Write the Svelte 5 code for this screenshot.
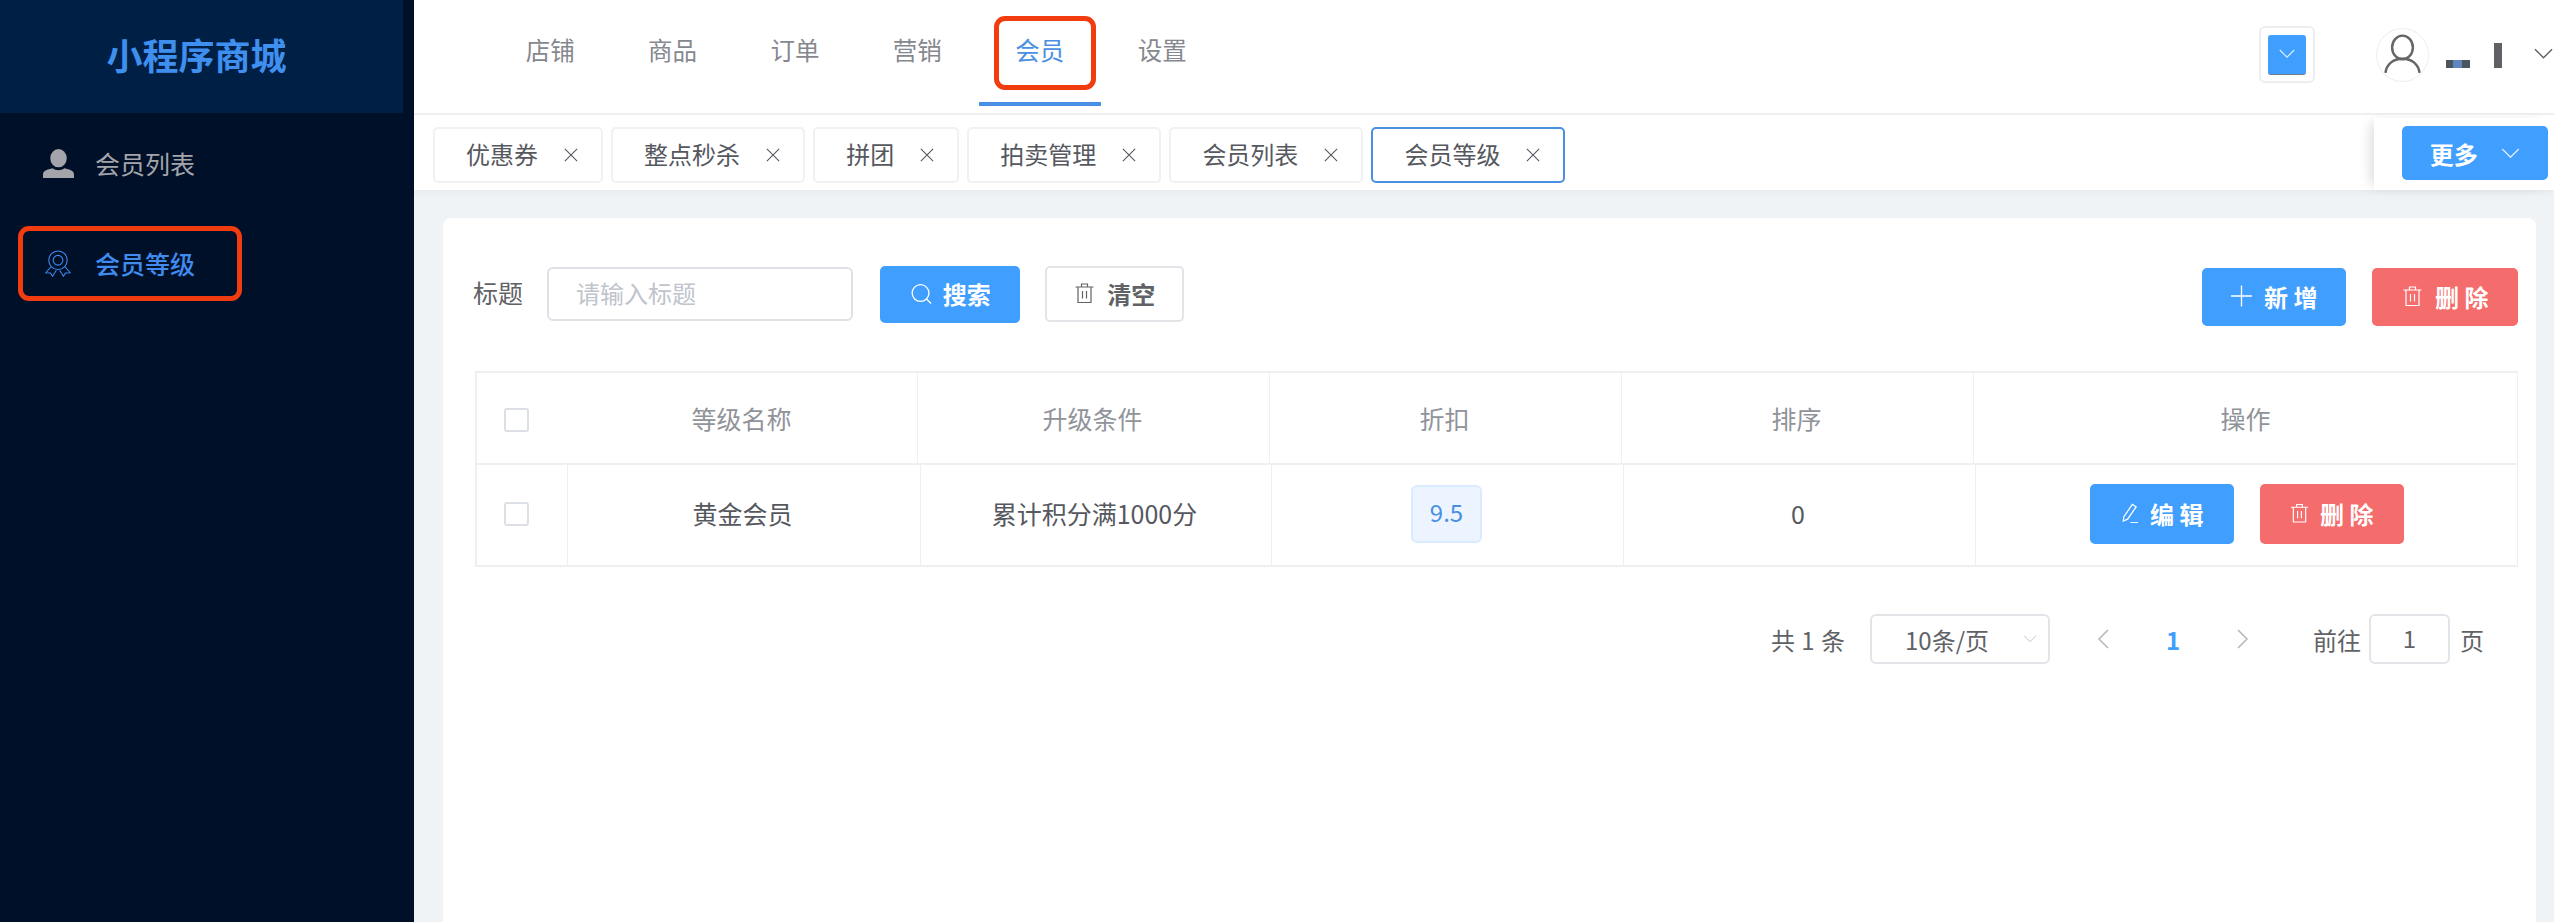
<script>
  const navItems = ['店铺', '商品', '订单', '营销', '会员', '设置'];
  const tabs = ['优惠券', '整点秒杀', '拼团', '拍卖管理', '会员列表', '会员等级'];
</script>

{#snippet trash()}
  <svg class="ico" viewBox="0 0 20 22" fill="none" stroke="currentColor" stroke-width="1.200">
    <path d="M1 5h18M7 5V2h6v3M3.500 5v15.500h13V5M8 9v7.500M12 9v7.500" />
  </svg>
{/snippet}

{#snippet chevron()}
  <svg class="chev" viewBox="0 0 20 12" fill="none" stroke="currentColor" stroke-width="1.500">
    <path d="M1 1l9 9 9-9" />
  </svg>
{/snippet}

<div class="app">
  <aside class="side">
    <div class="logo">小程序商城</div>
    <div class="menu-item">
      <span class="menu-slot">
        <svg class="user-ico" viewBox="0 0 32 30" fill="#a3a5aa">
          <ellipse cx="16" cy="9.500" rx="8.500" ry="9.500" />
          <path d="M0 30v-4c0-3 4-5 10-6 2 1.500 4 2 6 2s4-.5 6-2c6 1 10 3 10 6v4z" />
        </svg>
      </span>
      <span>会员列表</span>
    </div>
    <div class="menu-item active">
      <span class="menu-slot">
        <svg class="medal-ico" viewBox="0 0 24 24" fill="none" stroke="#3f8bee" stroke-width="1">
          <circle cx="12" cy="9" r="8.500" />
          <circle cx="12" cy="9" r="4.500" />
          <path d="M5.500 15L.8 20.500l4.200.2 2 3 3.500-5.500M18.500 15l4.700 5.500-4.200.2-2 3-3.500-5.500" />
        </svg>
      </span>
      <span>会员等级</span>
      <div class="mark mark-side"></div>
    </div>
  </aside>

  <div class="main">
    <header class="top">
      <nav class="nav">
        {#each navItems as item}
          <div class="nav-item" class:on={item === '会员'}>
            {item}
            {#if item === '会员'}<div class="mark mark-nav"></div>{/if}
          </div>
        {/each}
      </nav>
      <div class="top-right">
        <div class="drop-box">
          <div class="drop-inner">{@render chevron()}</div>
        </div>
        <div class="avatar">
          <svg viewBox="0 0 54 54" fill="none" stroke="#666" stroke-width="2.600">
            <ellipse cx="27" cy="19" rx="11" ry="12.500" />
            <path d="M9 46c1-9 8-15 18-15s17 6 18 15" />
          </svg>
        </div>
        <div class="blot-a"></div>
        <div class="blot-b"></div>
        <div class="user-chev">{@render chevron()}</div>
      </div>
    </header>

    <div class="tabbar">
      <div class="tabs">
        {#each tabs as tab}
          <div class="tab" class:cur={tab === '会员等级'}>
            <span>{tab}</span>
            <svg class="close" viewBox="0 0 16 16" fill="none" stroke="#55585e" stroke-width="1.300">
              <path d="M1 1l14 14M15 1L1 15" />
            </svg>
          </div>
        {/each}
      </div>
      <div class="more-wrap">
        <div class="btn more">更多 {@render chevron()}</div>
      </div>
    </div>

    <div class="content">
      <div class="card">
        <div class="toolbar">
          <span class="label">标题</span>
          <div class="input">请输入标题</div>
          <div class="btn primary search">
            <svg class="ico" viewBox="0 0 22 22" fill="none" stroke="currentColor" stroke-width="1.400">
              <circle cx="10" cy="10" r="8.800" /><path d="M16 16l5 5" />
            </svg>
            搜索
          </div>
          <div class="btn plain clear">{@render trash()} 清空</div>
          <div class="spacer"></div>
          <div class="btn primary act">
            <svg class="ico" viewBox="0 0 20 20" fill="none" stroke="currentColor" stroke-width="1.300">
              <path d="M10 0v20M0 10h20" />
            </svg>
            新 增
          </div>
          <div class="btn danger act del-top">{@render trash()} 删 除</div>
        </div>

        <div class="table">
          <div class="row head">
            <div class="cell first"><i class="check"></i><span>等级名称</span></div>
            <div class="cell shift">升级条件</div>
            <div class="cell shift">折扣</div>
            <div class="cell shift">排序</div>
            <div class="cell">操作</div>
          </div>
          <div class="row body">
            <div class="cell check-cell"><i class="check"></i></div>
            <div class="cell text">黄金会员</div>
            <div class="cell text">累计积分满1000分</div>
            <div class="cell"><span class="tag">9.5</span></div>
            <div class="cell text">0</div>
            <div class="cell ops">
              <div class="btn primary small">
                <svg class="ico" viewBox="0 0 20 22" fill="none" stroke="currentColor" stroke-width="1.300">
                  <path d="M4 15L13 2l4 2.500-9 13-4.500 2zM11 21h8" />
                </svg>
                编 辑
              </div>
              <div class="btn danger small">{@render trash()} 删 除</div>
            </div>
          </div>
        </div>

        <div class="pager">
          <span class="total">共 1 条</span>
          <div class="size">10条/页 {@render chevron()}</div>
          <div class="arrow">
            <svg viewBox="0 0 12 20" fill="none" stroke="#b4b6bb" stroke-width="1.500"><path d="M11 1l-9 9 9 9" /></svg>
          </div>
          <div class="page-num">1</div>
          <div class="arrow">
            <svg viewBox="0 0 12 20" fill="none" stroke="#b4b6bb" stroke-width="1.500"><path d="M1 1l9 9-9 9" /></svg>
          </div>
          <span class="goto">前往</span>
          <div class="goto-input">1</div>
          <span>页</span>
        </div>
      </div>
    </div>
  </div>
</div>

<style>
  :global(body) { margin: 0; background: #f0f3f5; }
  .app {
    display: flex; height: 922px; overflow: hidden;
    font-family: "Noto Sans CJK SC", "Noto Sans", sans-serif; color: #606266;
  }

  .side { width: 414px; flex: 0 0 auto; background: #001029; }
  .logo {
    width: 403px; height: 113px; background: #001f45; color: #3f8fef;
    font-size: 36px; font-weight: 700; line-height: 108px; text-align: center;
    box-sizing: border-box; padding-right: 10px;
  }
  .menu-item {
    position: relative; display: flex; align-items: center; height: 100px; padding-left: 42px;
    font-size: 25px; color: #a3a5aa;
  }
  .menu-item.active { color: #3f8bee; font-weight: 500; }
  .menu-slot { width: 32px; margin-right: 21px; display: flex; justify-content: center; }
  .user-ico { width: 31px; height: 29px; }
  .medal-ico { width: 26px; height: 27px; }
  .mark { position: absolute; border: 5px solid #f03c0e; border-radius: 11px; box-sizing: border-box; }
  .mark-side { left: 18px; top: 13px; width: 224px; height: 75px; }

  .main { flex: 1; min-width: 0; display: flex; flex-direction: column; }
  .top {
    display: flex; justify-content: space-between; height: 113px; background: #fff;
    border-bottom: 2px solid #eef0f3; padding-left: 75px;
  }
  .nav { display: flex; }
  .nav-item {
    position: relative; width: 122.400px; height: 106px; box-sizing: border-box; text-align: center;
    font-size: 24.500px; line-height: 100px; color: #85888e; border-bottom: 4px solid transparent;
  }
  .nav-item.on { color: #4a90e2; border-bottom-color: #4a90e2; }
  .mark-nav { left: 15px; top: 16px; width: 102px; height: 74px; }

  .top-right { display: flex; align-items: flex-start; }
  .drop-box {
    width: 56px; height: 57px; margin-top: 26px; box-sizing: border-box; display: flex;
    align-items: center; justify-content: center; background: #fff;
    border: 2px solid #eceef1; border-radius: 6px;
  }
  .drop-inner {
    width: 38px; height: 40px; background: #409eff; border-radius: 3px; display: flex;
    align-items: center; justify-content: center; color: #d8ecff;
    border-bottom: 1px solid #6f7c8c; box-sizing: border-box;
  }
  .drop-inner :global(.chev) { width: 16px; height: 10px; }
  .avatar {
    width: 53px; height: 54px; margin: 28px 0 0 61px; box-sizing: border-box;
    border: 1px solid #eceef1; border-radius: 50%;
  }
  .avatar svg { display: block; width: 100%; height: 100%; }
  .blot-a {
    width: 24px; height: 8px; margin: 60px 0 0 17px;
    background: linear-gradient(90deg, #4d5660 0 30%, #5f86bd 30% 65%, #4d5660 65%);
  }
  .blot-b { width: 8px; height: 25px; margin: 43px 0 0 24px; background: #5f6165; }
  .user-chev { margin: 48px 0 0 32px; width: 20px; color: #606266; overflow: hidden; }
  .user-chev :global(.chev) { display: block; width: 19px; height: 12px; }

  .tabbar {
    position: relative; display: flex; height: 75px; background: #fff;
    box-shadow: 0 3px 6px rgba(0, 0, 0, .04);
  }
  .tabs { flex: 1; display: flex; gap: 8.100px; padding: 12px 0 0 19px; }
  .tab {
    display: flex; align-items: center; height: 56px; box-sizing: border-box;
    padding: 0 23px 3px 31px; font-size: 24px; color: #55585e; background: #fff;
    border: 2px solid #eff1f3; border-radius: 5px;
  }
  .tab.cur { border-color: #4a90e2; }
  .close { width: 14px; height: 14px; margin: 3px 0 0 26px; }
  .more-wrap {
    width: 180px; flex: 0 0 auto; margin-top: 3px; box-sizing: border-box; padding: 8px 6px 0 28px;
    background: #fff; box-shadow: -8px 0 12px -5px rgba(0, 0, 0, .14);
  }

  .btn {
    display: flex; align-items: center; justify-content: center; box-sizing: border-box;
    border-radius: 5px; font-size: 24px; font-weight: 700; white-space: pre;
  }
  .btn :global(.ico) { width: 21px; height: 22px; margin-right: 7px; }
  .more { height: 54px; background: #409eff; color: #fff; }
  .more :global(.chev) { width: 19px; height: 11px; margin-left: 18px; color: #d8ecff; }
  .primary { background: #409eff; color: #fff; }
  .danger { background: #f56c6c; color: #fff; }
  .plain { background: #fff; color: #606266; border: 2px solid #e2e4e8; }

  .content { flex: 1; min-height: 0; padding: 28px 18px 0 29px; background: #f0f3f5; }
  .card { height: 100%; background: #fff; border-radius: 8px 8px 0 0; padding: 48px 18px 0 30px; box-sizing: border-box; }

  .toolbar { display: flex; align-items: flex-start; height: 60px; }
  .label { font-size: 25px; line-height: 52px; margin-right: 24px; color: #606266; }
  .input {
    width: 306px; height: 54px; margin-top: 1px; box-sizing: border-box; padding-left: 27px;
    border: 2px solid #dfe1e6; border-radius: 6px; color: #c0c4cc; font-size: 24px; line-height: 48px;
  }
  .search { width: 140px; height: 57px; margin-left: 27px; padding: 0 0 2px 2px; }
  .search :global(.ico) { margin-right: 5px; }
  .clear { width: 139px; height: 56px; margin-left: 25px; padding-bottom: 2px; }
  .spacer { flex: 1; }
  .act { width: 144px; height: 58px; margin-top: 2px; padding-bottom: 2px; }
  .del-top { width: 146px; margin-left: 26px; }

  .table { margin: 45px 0 0 2px; border: solid #eeeff1; border-width: 2px 1px 2px 2px; }
  .row { display: grid; font-size: 25px; }
  .head { grid-template-columns: 440px 352px 352px 352px 1fr; height: 90px; color: #909399; border-bottom: 2px solid #eeeff1; }
  .body { grid-template-columns: 90px 353px 351px 352px 352px 1fr; height: 100px; color: #55585e; }
  .cell { display: flex; align-items: center; justify-content: center; border-left: 1px solid #eeeff1; }
  .cell:first-child { border-left: 0; }
  .shift { padding-right: 2px; }
  .first { display: grid; grid-template-columns: 92px 1fr; justify-items: center; }
  .first .check { justify-self: start; margin: 3px 0 0 27px; }
  .first span { white-space: nowrap; margin-right: 3px; }
  .check-cell { justify-content: flex-start; padding: 0 0 2px 27px; }
  .text { padding: 0 3px 4px 0; box-sizing: border-box; }
  .check {
    display: block; flex: 0 0 auto; width: 25px; height: 24px; box-sizing: border-box;
    border: 2px solid #dcdfe6; border-radius: 3px; background: #fff;
  }
  .tag {
    width: 71px; height: 58px; box-sizing: border-box; text-align: center; font-size: 24px; line-height: 50px;
    margin: 0 0 2px -2px; color: #4a90e2; background: #ecf5ff; border: 2px solid #d9ecff; border-radius: 6px;
  }
  .ops { gap: 26px; padding-bottom: 2px; }
  .small { width: 144px; height: 60px; padding-bottom: 2px; }
  .small :global(.ico) { width: 19px; height: 22px; margin-right: 6px; }

  .pager { display: flex; align-items: center; justify-content: flex-end; margin-top: 47px; padding-right: 34px; font-size: 24px; color: #606266; }
  .total { margin-right: 25px; word-spacing: 1px; }
  .size {
    display: flex; align-items: center; justify-content: space-between; width: 180px; height: 50px;
    box-sizing: border-box; padding: 0 11px 0 33px; border: 2px solid #e2e4e8; border-radius: 6px;
  }
  .size :global(.chev) { width: 14px; height: 8px; color: #c0c4cc; }
  .arrow { width: 70px; display: flex; justify-content: center; }
  .arrow svg { width: 12px; height: 20px; }
  .page-num { width: 70px; text-align: center; color: #409eff; font-weight: 700; }
  .size + .arrow { margin-left: 18px; }
  .goto { margin-left: 35px; margin-right: 8px; }
  .goto-input {
    width: 81px; height: 50px; box-sizing: border-box; text-align: center; line-height: 44px;
    border: 2px solid #e2e4e8; border-radius: 6px; margin-right: 10px;
  }
</style>
